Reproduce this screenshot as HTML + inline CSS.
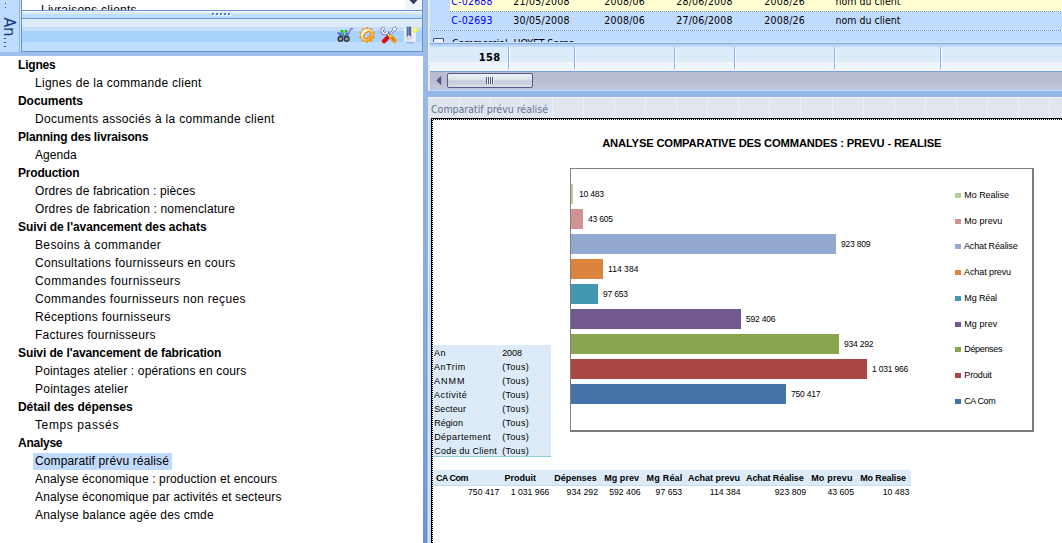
<!DOCTYPE html>
<html lang="fr">
<head>
<meta charset="utf-8">
<title>Comparatif prévu réalisé</title>
<style>
html,body{margin:0;padding:0;}
body{width:1062px;height:543px;overflow:hidden;background:#fff;position:relative;font-family:"Liberation Sans",sans-serif;}
.abs{position:absolute;}
/* ---------- left tree ---------- */
.tree{position:absolute;left:0;top:56px;width:423px;font-family:"Liberation Sans",sans-serif;font-size:12px;color:#000;}
.tree div{position:absolute;white-space:nowrap;height:18px;line-height:18px;}
.tree .g{left:18px;font-weight:bold;}
.tree .i{left:35px;}
.tree .sel{background:#c1dafb;left:33px;padding:0 3px 0 2px;height:17px;line-height:17px;}
/* ---------- grid ---------- */
.grid{font-family:"DejaVu Sans Condensed","DejaVu Sans","Liberation Sans",sans-serif;font-size:10.5px;color:#000;}
.grid span{position:absolute;white-space:nowrap;letter-spacing:0.2px;margin-left:-0.7px;}
/* ---------- chart ---------- */
.cal{font-family:"Liberation Sans",sans-serif;}
.lbl{position:absolute;letter-spacing:-0.2px;font-size:8.5px;white-space:nowrap;line-height:10px;color:#000;}
.leg{position:absolute;font-size:9px;white-space:nowrap;line-height:12px;color:#000;left:964px;}
.lm{position:absolute;left:955px;width:6px;height:5px;}
.bar{position:absolute;left:571px;height:20px;}
.pv{position:absolute;font-size:9px;white-space:nowrap;line-height:14px;color:#000;}
.th{position:absolute;font-size:9px;font-weight:bold;white-space:nowrap;line-height:15px;top:471px;color:#000;}
.td{position:absolute;font-size:8.7px;white-space:nowrap;line-height:14px;top:485px;text-align:right;color:#000;}
</style>
</head>
<body>

<!-- ============ LEFT TOP STRIP / PANEL HEADER ============ -->
<div class="abs" style="left:0;top:0;width:19px;height:52px;background:#bfdbff;"></div>
<div class="abs" style="left:19px;top:0;width:1px;height:52px;background:#8fb0e6;"></div>
<div class="abs" style="left:20px;top:0;width:1px;height:52px;background:#d2e4fb;"></div>
<div class="abs" style="left:21px;top:0;width:1px;height:52px;background:#6593cf;"></div>
<!-- vertical "An..." tab text -->
<div class="abs" id="an" style="left:-11px;top:17px;width:40px;height:20px;transform:rotate(90deg);transform-origin:center;font-family:'DejaVu Sans Condensed','Liberation Sans',sans-serif;font-size:16px;line-height:20px;color:#1a3580;white-space:nowrap;text-align:center;">An</div>
<div class="abs" style="left:5px;top:3px;width:1px;height:1px;background:#3b4f8a;"></div>
<div class="abs" style="left:5px;top:7px;width:1px;height:1px;background:#3b4f8a;"></div>
<div class="abs" style="left:4px;top:38px;width:2px;height:1px;background:#3b4f8a;"></div>
<div class="abs" style="left:4px;top:42px;width:2px;height:1px;background:#3b4f8a;"></div>
<div class="abs" style="left:4px;top:46px;width:2px;height:1px;background:#3b4f8a;"></div>

<!-- list box (cut) -->
<div class="abs" style="left:22px;top:0;width:400px;height:10px;background:#fff;overflow:hidden;">
  <div class="abs" style="left:19px;top:3px;font-size:12px;line-height:14px;letter-spacing:0.25px;white-space:nowrap;color:#000;">Livraisons clients</div>
  <div class="abs" style="left:383px;top:0;width:17px;height:10px;background:#f0f5fc;"></div>
  <svg class="abs" style="left:387px;top:0" width="10" height="6"><path d="M0.5 0 H8.5 L4.5 4.2 Z" fill="#333d66"/></svg>
</div>
<div class="abs" style="left:22px;top:10px;width:400px;height:1px;background:#6593cf;"></div>
<div class="abs" style="left:22px;top:11px;width:400px;height:1px;background:#ffffff;"></div>
<div class="abs" style="left:22px;top:12px;width:400px;height:2px;background:#dcebfa;"></div>
<div class="abs" style="left:22px;top:14px;width:400px;height:4px;background:#bfddfc;"></div>
<div class="abs" style="left:22px;top:18px;width:400px;height:1px;background:#6593cf;"></div>
<!-- grip -->
<svg class="abs" style="left:211px;top:12px" width="22" height="5">
  <g fill="#ffffff"><rect x="2" y="2" width="2" height="2"/><rect x="6" y="2" width="2" height="2"/><rect x="10" y="2" width="2" height="2"/><rect x="14" y="2" width="2" height="2"/><rect x="18" y="2" width="2" height="2"/></g>
  <g fill="#4f83cf"><rect x="1" y="1" width="2" height="2"/><rect x="5" y="1" width="2" height="2"/><rect x="9" y="1" width="2" height="2"/><rect x="13" y="1" width="2" height="2"/><rect x="17" y="1" width="2" height="2"/></g>
</svg>
<!-- toolbar gradient -->
<div class="abs" style="left:22px;top:19px;width:400px;height:1px;background:#e6f2fc;"></div>
<div class="abs" style="left:22px;top:20px;width:400px;height:7px;background:#dcebfa;"></div>
<div class="abs" style="left:22px;top:27px;width:400px;height:4px;background:#c5ddfb;"></div>
<div class="abs" style="left:22px;top:31px;width:400px;height:11px;background:#a9d2fc;"></div>
<div class="abs" style="left:22px;top:42px;width:400px;height:9px;background:#bfddfc;"></div>
<div class="abs" style="left:22px;top:51px;width:400px;height:1px;background:#6593cf;"></div>
<div class="abs" style="left:422px;top:0;width:1px;height:52px;background:#6593cf;"></div>
<div class="abs" style="left:0;top:52px;width:423px;height:4px;background:#9dbfea;"></div>

<!-- toolbar icons -->
<!-- cart -->
<svg class="abs" style="left:336px;top:27px" width="18" height="16" viewBox="0 0 18 16">
  <path d="M1.3 5.6 L4.2 9.3 H11.5 L12.6 5.6 Z" fill="#2f7fd8"/>
  <rect x="4.6" y="2.9" width="2.9" height="2.3" rx="0.6" fill="#22c022"/>
  <rect x="8.6" y="2.9" width="2.9" height="2.3" rx="0.6" fill="#22c022"/>
  <rect x="5.3" y="6" width="2" height="1.8" fill="#3fc43a"/>
  <rect x="7.8" y="6" width="1.8" height="1.8" fill="#d8d838"/>
  <path d="M1.2 5.4 L4.3 9.4 H11.6" fill="none" stroke="#9370db" stroke-width="1.1"/>
  <path d="M11.3 9.3 L15 1.7 H17" fill="none" stroke="#8a63d6" stroke-width="1.2"/>
  <circle cx="4.5" cy="11.9" r="2.35" fill="#8f9ab0" stroke="#33363c" stroke-width="1.4"/>
  <circle cx="10.7" cy="11.9" r="2.35" fill="#8f9ab0" stroke="#33363c" stroke-width="1.4"/>
</svg>
<!-- gear -->
<svg class="abs" style="left:358px;top:26px" width="18" height="18" viewBox="-9 -9 18 18">
  <defs><linearGradient id="gg" x1="0.1" y1="0.1" x2="0.9" y2="0.9"><stop offset="0" stop-color="#ffffff"/><stop offset="0.45" stop-color="#fff6c8"/><stop offset="0.8" stop-color="#f8a828"/><stop offset="1" stop-color="#ea8000"/></linearGradient></defs>
  <g transform="translate(0.1,0)">
  <g fill="#f09410"><circle cx="0.00" cy="-6.70" r="1.35"/><circle cx="3.94" cy="-5.42" r="1.35"/><circle cx="6.37" cy="-2.07" r="1.35"/><circle cx="6.37" cy="2.07" r="1.35"/><circle cx="3.94" cy="5.42" r="1.35"/><circle cx="0.00" cy="6.70" r="1.35"/><circle cx="-3.94" cy="5.42" r="1.35"/><circle cx="-6.37" cy="2.07" r="1.35"/><circle cx="-6.37" cy="-2.07" r="1.35"/><circle cx="-3.94" cy="-5.42" r="1.35"/></g>
  <circle cx="0" cy="0" r="6.3" fill="url(#gg)" stroke="#f4a020" stroke-width="0.7"/>
  <ellipse cx="0" cy="0" rx="4.9" ry="3.1" transform="rotate(-42)" fill="#ef8c06"/>
  <ellipse cx="0.1" cy="0.1" rx="3.7" ry="1.9" transform="rotate(-42)" fill="#a9d2fc"/>
  </g>
</svg>
<!-- tools -->
<svg class="abs" style="left:380px;top:26px" width="18" height="18" viewBox="0 0 18 18">
  <path d="M9.4 9.4 L14.2 3.6" stroke="#34348f" stroke-width="2.2" stroke-linecap="round"/>
  <ellipse cx="14.5" cy="3.1" rx="2.2" ry="1.8" transform="rotate(-40 14.5 3.1)" fill="#ffffff" stroke="#4a4aa2" stroke-width="0.6"/>
  <path d="M9.2 9.6 L14 3.8" stroke="#ffffff" stroke-width="1.2" stroke-linecap="round"/>
  <path d="M8.6 10.4 L4 15.2" stroke="#e30613" stroke-width="4.3" stroke-linecap="round"/>
  <path d="M6.4 6.8 L9.6 9.8" stroke="#2a2a8c" stroke-width="2.8"/>
  <path d="M6.2 6.6 L9.6 9.8" stroke="#ffffff" stroke-width="1.7"/>
  <path d="M4.56 2.21 A2.7 2.7 0 1 0 7.49 5.14" fill="none" stroke="#2a2a8c" stroke-width="2.9" stroke-linecap="butt"/>
  <path d="M4.56 2.21 A2.7 2.7 0 1 0 7.49 5.14" fill="none" stroke="#ffffff" stroke-width="1.8" stroke-linecap="butt"/>
  <path d="M10.6 10.4 L14.6 14.8" stroke="#f29a1a" stroke-width="4.3" stroke-linecap="round"/>
  <path d="M11.6 11.6 L14.2 14.4" stroke="#e07a08" stroke-width="1.8" stroke-linecap="round" stroke-dasharray="1 0.8"/>
  <circle cx="10.3" cy="10.2" r="1.2" fill="#ffe070"/>
</svg>
<!-- document -->
<svg class="abs" style="left:402px;top:26px" width="18" height="18" viewBox="0 0 18 18">
  <ellipse cx="8.2" cy="16.6" rx="4.6" ry="0.8" fill="#7fa6df" opacity="0.8"/>
  <rect x="2.2" y="1.8" width="11.6" height="14" fill="#edf1fa"/>
  <rect x="3.4" y="11.6" width="8.2" height="1" fill="#c5cad6"/>
  <rect x="3.4" y="13.4" width="6.6" height="1" fill="#cdd2dc"/>
  <path d="M4.6 0.8 H9.2 V11.2 L6.9 9 L4.6 11.2 Z" fill="#4f6499"/>
  <path d="M5.8 0.8 H7.2 V8.6 L6.9 8.4 L5.8 9.4 Z" fill="#7d90bd"/>
  <circle cx="13.2" cy="4.2" r="2.7" fill="#f6f046"/>
  <circle cx="13" cy="4.1" r="1.1" fill="#fffde0"/>
</svg>


<!-- ============ TREE ============ -->
<div class="tree">
<div class="g" style="top:0px;letter-spacing:-0.194px">Lignes</div>
<div class="i" style="top:18px;letter-spacing:0.283px">Lignes de la commande client</div>
<div class="g" style="top:36px;letter-spacing:-0.055px">Documents</div>
<div class="i" style="top:54px;letter-spacing:0.312px">Documents associés à la commande client</div>
<div class="g" style="top:72px;letter-spacing:-0.166px">Planning des livraisons</div>
<div class="i" style="top:90px;letter-spacing:0.045px">Agenda</div>
<div class="g" style="top:108px;letter-spacing:-0.203px">Production</div>
<div class="i" style="top:126px;letter-spacing:0.119px">Ordres de fabrication : pièces</div>
<div class="i" style="top:144px;letter-spacing:0.144px">Ordres de fabrication : nomenclature</div>
<div class="g" style="top:162px;letter-spacing:-0.054px">Suivi de l'avancement des achats</div>
<div class="i" style="top:180px;letter-spacing:0.356px">Besoins à commander</div>
<div class="i" style="top:198px;letter-spacing:0.28px">Consultations fournisseurs en cours</div>
<div class="i" style="top:216px;letter-spacing:0.403px">Commandes fournisseurs</div>
<div class="i" style="top:234px;letter-spacing:0.346px">Commandes fournisseurs non reçues</div>
<div class="i" style="top:252px;letter-spacing:0.303px">Réceptions fournisseurs</div>
<div class="i" style="top:270px;letter-spacing:0.25px">Factures fournisseurs</div>
<div class="g" style="top:288px;letter-spacing:-0.103px">Suivi de l'avancement de fabrication</div>
<div class="i" style="top:306px;letter-spacing:0.171px">Pointages atelier : opérations en cours</div>
<div class="i" style="top:324px;letter-spacing:0.226px">Pointages atelier</div>
<div class="g" style="top:342px;letter-spacing:-0.044px">Détail des dépenses</div>
<div class="i" style="top:360px;letter-spacing:0.609px">Temps passés</div>
<div class="g" style="top:378px;letter-spacing:-0.255px">Analyse</div>
<div class="i sel" style="top:396.5px;letter-spacing:0.138px">Comparatif prévu réalisé</div>
<div class="i" style="top:414px;letter-spacing:0.129px">Analyse économique : production et encours</div>
<div class="i" style="top:432px;letter-spacing:0.13px">Analyse économique par activités et secteurs</div>
<div class="i" style="top:450px;letter-spacing:0.184px">Analyse balance agée des cmde</div>
</div>

<!-- ============ VERTICAL SPLITTER ============ -->
<div class="abs" style="left:423px;top:0;width:4px;height:543px;background:linear-gradient(#a0c1eb,#8fb4e6 27%,#7ba3dc 77%,#6694d2);"></div>
<div class="abs" style="left:427px;top:0;width:1px;height:543px;background:#a9b6cf;"></div>
<div class="abs" style="left:428px;top:0;width:1px;height:543px;background:#e8eef7;"></div>

<!-- ============ RIGHT TOP GRID ============ -->
<div class="abs" style="left:429px;top:0;width:1px;height:91px;background:#dce8f8;"></div>
<div class="abs grid" style="left:430px;top:0;width:632px;height:42px;background:#bfdbff;overflow:hidden;">
  <div class="abs" style="left:20px;top:0;width:612px;height:11px;background:#ffffd2;"></div>
  <div class="abs" style="left:20px;top:11px;width:612px;height:1px;background:repeating-linear-gradient(90deg,#6f8fcd 0 1px,#fbfcf4 1px 2px);"></div>
  <div class="abs" style="left:0px;top:30px;width:632px;height:1px;background:repeating-linear-gradient(90deg,#6a8ccf 0 1px,#eef5ff 1px 2px);"></div>
  <span style="left:22px;top:-6px;line-height:14px;color:#0000ff;">C-02688</span>
  <span style="left:84px;top:-6px;line-height:14px;">21/05/2008</span>
  <span style="left:175px;top:-6px;line-height:14px;">2008/06</span>
  <span style="left:247px;top:-6px;line-height:14px;">28/06/2008</span>
  <span style="left:335px;top:-6px;line-height:14px;">2008/26</span>
  <span style="left:407px;top:-6px;line-height:14px;letter-spacing:0;margin-left:-1.5px;">nom du client</span>
  <span style="left:22px;top:13px;line-height:14px;color:#0000ff;">C-02693</span>
  <span style="left:84px;top:13px;line-height:14px;">30/05/2008</span>
  <span style="left:175px;top:13px;line-height:14px;">2008/06</span>
  <span style="left:247px;top:13px;line-height:14px;">27/06/2008</span>
  <span style="left:335px;top:13px;line-height:14px;">2008/26</span>
  <span style="left:407px;top:13px;line-height:14px;letter-spacing:0;margin-left:-1.5px;">nom du client</span>
  <div class="abs" style="left:3px;top:38px;width:11px;height:11px;background:linear-gradient(135deg,#e4e9f2,#ffffff);border:1px solid #35507c;box-sizing:border-box;border-radius:1px;"></div>
  <span style="left:22px;top:36px;line-height:14px;letter-spacing:-0.1px;margin-left:0;">Commercial: HOYET Serge</span>
</div>
<!-- footer row -->
<div class="abs" style="left:430px;top:42px;width:632px;height:1px;background:#d6e6fb;"></div>
<div class="abs" style="left:430px;top:43px;width:632px;height:1px;background:#84abe0;"></div>
<div class="abs" style="left:430px;top:44px;width:632px;height:3px;background:linear-gradient(#aecef6,#c6dcf9);"></div>
<div class="abs" style="left:430px;top:47px;width:632px;height:15px;background:#dcebfa;"></div>
<div class="abs" style="left:430px;top:62px;width:632px;height:9px;background:#f0f5fc;"></div>
<div class="abs" style="left:430px;top:71px;width:632px;height:1px;background:#76a0da;"></div>
<div class="abs grid" style="left:430px;top:47px;width:632px;height:23px;">
  <span style="left:49.5px;top:4px;line-height:14px;font-weight:bold;font-size:11px;letter-spacing:0.3px;">158</span>
  <div class="abs" style="left:78px;top:0px;width:1px;height:22px;background:#8fb3e6;"></div><div class="abs" style="left:79px;top:0px;width:1px;height:22px;background:#f7faff;"></div>
  <div class="abs" style="left:144px;top:0px;width:1px;height:22px;background:#8fb3e6;"></div><div class="abs" style="left:145px;top:0px;width:1px;height:22px;background:#f7faff;"></div>
  <div class="abs" style="left:244px;top:0px;width:1px;height:22px;background:#8fb3e6;"></div><div class="abs" style="left:245px;top:0px;width:1px;height:22px;background:#f7faff;"></div>
  <div class="abs" style="left:304px;top:0px;width:1px;height:22px;background:#8fb3e6;"></div><div class="abs" style="left:305px;top:0px;width:1px;height:22px;background:#f7faff;"></div>
  <div class="abs" style="left:404px;top:0px;width:1px;height:22px;background:#8fb3e6;"></div><div class="abs" style="left:405px;top:0px;width:1px;height:22px;background:#f7faff;"></div>
  <div class="abs" style="left:510px;top:0px;width:1px;height:22px;background:#8fb3e6;"></div><div class="abs" style="left:511px;top:0px;width:1px;height:22px;background:#f7faff;"></div>
</div>
<!-- scrollbar -->
<div class="abs" style="left:430px;top:72px;width:632px;height:17px;background:linear-gradient(#b7bcd1,#b9bed2 55%,#c2c6d8);"></div>
<svg class="abs" style="left:435px;top:75px" width="8" height="11"><path d="M6.2 0.8 L1.2 5.5 L6.2 10.2 Z" fill="#4b5a8c"/></svg>
<div class="abs" style="left:447px;top:73px;width:86px;height:15px;box-sizing:border-box;border:1px solid #4f5e8e;border-radius:2px;background:linear-gradient(#eef2f6,#dfe5eb 40%,#c5ced9 55%,#cbd3dd 80%,#dde3ea);"></div>
<svg class="abs" style="left:486px;top:77px" width="9" height="7"><g fill="#f2f5f8"><rect x="1" y="0" width="1" height="7"/><rect x="3" y="0" width="1" height="7"/><rect x="5" y="0" width="1" height="7"/><rect x="7" y="0" width="1" height="7"/></g><g fill="#4f5a78"><rect x="0" y="0" width="1" height="7"/><rect x="2" y="0" width="1" height="7"/><rect x="4" y="0" width="1" height="7"/><rect x="6" y="0" width="1" height="7"/></g></svg>
<div class="abs" style="left:429px;top:89px;width:633px;height:1px;background:#b4cff4;"></div>
<div class="abs" style="left:429px;top:90px;width:633px;height:1px;background:#c6daf5;"></div>
<div class="abs" style="left:427px;top:91px;width:635px;height:6px;background:#93b7e7;"></div>

<!-- panel caption -->
<div class="abs" style="left:428px;top:97px;width:634px;height:21px;background:#e1e6ee;"></div>
<svg class="abs" style="left:428px;top:97px" width="634" height="21"><g fill="#ebf1f8"><rect x="31" y="0" width="1" height="21"/><rect x="62" y="0" width="1" height="21"/><rect x="93" y="0" width="1" height="21"/><rect x="124" y="0" width="1" height="21"/><rect x="155" y="0" width="1" height="21"/><rect x="186" y="0" width="1" height="21"/><rect x="217" y="0" width="1" height="21"/><rect x="248" y="0" width="1" height="21"/><rect x="279" y="0" width="1" height="21"/><rect x="310" y="0" width="1" height="21"/><rect x="341" y="0" width="1" height="21"/><rect x="372" y="0" width="1" height="21"/><rect x="404" y="0" width="1" height="21"/><rect x="435" y="0" width="1" height="21"/><rect x="466" y="0" width="1" height="21"/><rect x="497" y="0" width="1" height="21"/><rect x="528" y="0" width="1" height="21"/><rect x="559" y="0" width="1" height="21"/><rect x="590" y="0" width="1" height="21"/><rect x="621" y="0" width="1" height="21"/></g></svg>
<div class="abs" style="left:428px;top:97px;width:634px;height:1px;background:#f2f5fa;"></div>
<div class="abs grid" style="left:431px;top:102px;line-height:14px;color:#61729a;font-size:10.5px;white-space:nowrap;">Comparatif prévu réalisé</div>

<!-- ============ CHART AREA ============ -->
<div class="abs" style="left:428px;top:118px;width:634px;height:425px;background:#fff;"></div>
<div class="abs" style="left:428px;top:118px;width:1px;height:425px;background:#e0e8f2;"></div>
<div class="abs" style="left:429px;top:118px;width:2px;height:425px;background:#bfdbff;"></div>
<div class="abs" style="left:431px;top:118px;width:631px;height:1px;background:#000;"></div>
<div class="abs" style="left:431px;top:119px;width:631px;height:1px;background:repeating-linear-gradient(90deg,#000 0 1px,#fff 1px 2px);"></div>
<div class="abs" style="left:432px;top:118px;width:1px;height:425px;background:repeating-linear-gradient(180deg,#000 0 1px,#fff 1px 2px);"></div>
<div class="abs" style="left:431px;top:118px;width:1px;height:425px;background:#000;"></div>

<div class="abs cal" style="left:602.2px;top:135px;font-size:11.2px;font-weight:bold;line-height:16px;white-space:nowrap;color:#000;letter-spacing:-0.16px;">ANALYSE COMPARATIVE DES COMMANDES : PREVU - REALISE</div>

<!-- plot frame -->
<div class="abs" style="left:570px;top:168px;width:464px;height:264px;box-sizing:border-box;border:1px solid #808080;border-right:2px solid #7c7c7c;border-bottom:2px solid #7c7c7c;"></div>

<div class="bar" style="top:184px;width:2px;background:#b9cd96;"></div>
<div class="bar" style="top:209px;width:12px;background:#d19392;"></div>
<div class="bar" style="top:234px;width:265px;background:#93a9cf;"></div>
<div class="bar" style="top:259px;width:32px;background:#db843d;"></div>
<div class="bar" style="top:284px;width:27px;background:#4198af;"></div>
<div class="bar" style="top:309px;width:170px;background:#71588f;"></div>
<div class="bar" style="top:334px;width:268px;background:#89a54e;"></div>
<div class="bar" style="top:359px;width:296px;background:#aa4643;"></div>
<div class="bar" style="top:384px;width:215px;background:#4572a7;"></div>

<div class="lbl cal" style="left:579px;top:189px;">10 483</div>
<div class="lbl cal" style="left:588px;top:214px;">43 605</div>
<div class="lbl cal" style="left:841px;top:239px;">923 809</div>
<div class="lbl cal" style="left:608px;top:264px;letter-spacing:0.05px;">114 384</div>
<div class="lbl cal" style="left:603px;top:289px;">97 653</div>
<div class="lbl cal" style="left:746px;top:314px;">592 406</div>
<div class="lbl cal" style="left:844px;top:339px;">934 292</div>
<div class="lbl cal" style="left:872px;top:364px;">1 031 966</div>
<div class="lbl cal" style="left:791px;top:389px;">750 417</div>

<div class="lm" style="top:193px;background:#b9cd96;"></div><div class="leg cal" style="top:189px;left:964.3px;letter-spacing:-0.046px;">Mo Realise</div>
<div class="lm" style="top:219px;background:#d19392;"></div><div class="leg cal" style="top:215px;left:964.3px;letter-spacing:0.07px;">Mo prevu</div>
<div class="lm" style="top:244px;background:#93a9cf;"></div><div class="leg cal" style="top:240px;left:964.0px;letter-spacing:-0.152px;">Achat Réalise</div>
<div class="lm" style="top:270px;background:#db843d;"></div><div class="leg cal" style="top:266px;left:964.0px;letter-spacing:-0.092px;">Achat prevu</div>
<div class="lm" style="top:296px;background:#4198af;"></div><div class="leg cal" style="top:292px;left:964.3px;letter-spacing:-0.119px;">Mg Réal</div>
<div class="lm" style="top:322px;background:#71588f;"></div><div class="leg cal" style="top:318px;left:964.3px;letter-spacing:0.065px;">Mg prev</div>
<div class="lm" style="top:347px;background:#89a54e;"></div><div class="leg cal" style="top:343px;left:964.3px;letter-spacing:-0.347px;">Dépenses</div>
<div class="lm" style="top:373px;background:#aa4643;"></div><div class="leg cal" style="top:369px;left:964.3px;letter-spacing:-0.169px;">Produit</div>
<div class="lm" style="top:399px;background:#4572a7;"></div><div class="leg cal" style="top:395px;left:964.3px;letter-spacing:-0.422px;">CA Com</div>

<!-- pivot filter block -->
<div class="abs" style="left:433px;top:345px;width:118px;height:111px;background:#dcebf7;"></div>
<div class="abs" style="left:433px;top:456px;width:118px;height:1px;background:#93cbdf;"></div>
<div class="pv cal" style="left:434.1px;top:346px;letter-spacing:0.3px;">An</div><div class="pv cal" style="left:502.2px;top:346px;letter-spacing:-0.105px;">2008</div>
<div class="pv cal" style="left:434.1px;top:360px;letter-spacing:0.486px;">AnTrim</div><div class="pv cal" style="left:502.2px;top:360px;letter-spacing:0.298px;">(Tous)</div>
<div class="pv cal" style="left:434.1px;top:374px;letter-spacing:0.967px;">ANMM</div><div class="pv cal" style="left:502.2px;top:374px;letter-spacing:0.298px;">(Tous)</div>
<div class="pv cal" style="left:434.1px;top:388px;letter-spacing:0.528px;">Activité</div><div class="pv cal" style="left:502.2px;top:388px;letter-spacing:0.298px;">(Tous)</div>
<div class="pv cal" style="left:434.2px;top:402px;letter-spacing:0.13px;">Secteur</div><div class="pv cal" style="left:502.2px;top:402px;letter-spacing:0.298px;">(Tous)</div>
<div class="pv cal" style="left:434.2px;top:416px;letter-spacing:0.037px;">Région</div><div class="pv cal" style="left:502.2px;top:416px;letter-spacing:0.298px;">(Tous)</div>
<div class="pv cal" style="left:434.2px;top:430px;letter-spacing:0.437px;">Département</div><div class="pv cal" style="left:502.2px;top:430px;letter-spacing:0.298px;">(Tous)</div>
<div class="pv cal" style="left:434.2px;top:444px;letter-spacing:0.228px;">Code du Client</div><div class="pv cal" style="left:502.2px;top:444px;letter-spacing:0.298px;">(Tous)</div>

<!-- pivot table -->
<div class="abs" style="left:433px;top:470px;width:478px;height:15px;background:#dcebf7;"></div>
<div class="abs" style="left:433px;top:485px;width:478px;height:1px;background:#c3ddef;"></div>
<div class="th cal" style="left:435.9px;letter-spacing:-0.519px;">CA Com</div>
<div class="th cal" style="left:504.6px;letter-spacing:-0.033px;">Produit</div>
<div class="th cal" style="left:554.3px;letter-spacing:-0.017px;">Dépenses</div>
<div class="th cal" style="left:604.2px;letter-spacing:0.05px;">Mg prev</div>
<div class="th cal" style="left:646.6px;letter-spacing:0.199px;">Mg Réal</div>
<div class="th cal" style="left:688.1px;letter-spacing:-0.022px;">Achat prevu</div>
<div class="th cal" style="left:746.0px;letter-spacing:-0.11px;">Achat Réalise</div>
<div class="th cal" style="left:811.2px;letter-spacing:0.185px;">Mo prevu</div>
<div class="th cal" style="left:860.2px;letter-spacing:-0.124px;">Mo Realise</div>
<div class="td cal" style="left:439.4px;width:60px;">750 417</div>
<div class="td cal" style="left:489.3px;width:60px;">1 031 966</div>
<div class="td cal" style="left:538.0px;width:60px;">934 292</div>
<div class="td cal" style="left:580.6px;width:60px;">592 406</div>
<div class="td cal" style="left:622.2px;width:60px;">97 653</div>
<div class="td cal" style="left:680.6px;width:60px;">114 384</div>
<div class="td cal" style="left:746.2px;width:60px;">923 809</div>
<div class="td cal" style="left:794.0px;width:60px;">43 605</div>
<div class="td cal" style="left:849.3px;width:60px;">10 483</div>
</body>
</html>
